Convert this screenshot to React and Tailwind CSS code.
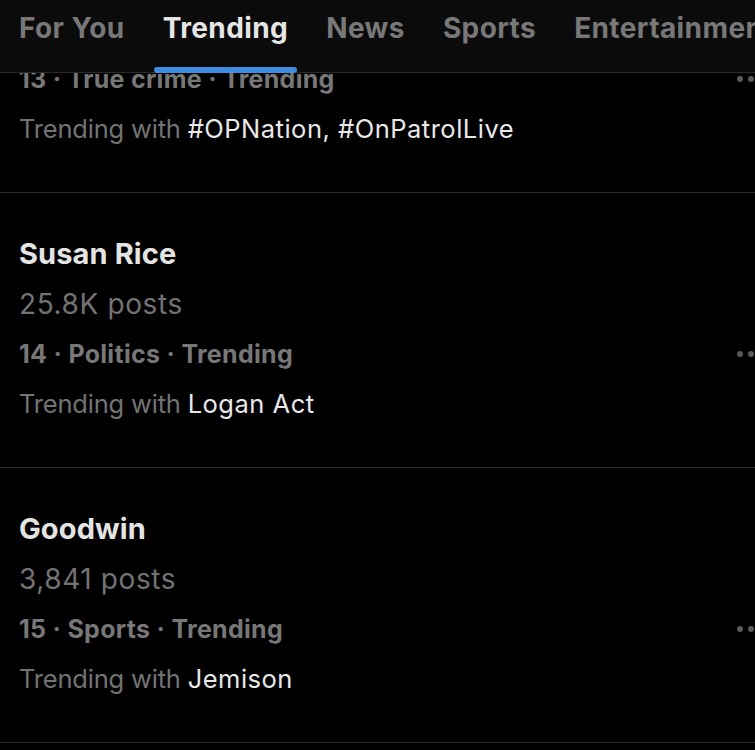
import React from "react";

const font = { fontFamily: "Inter, 'Noto Sans', sans-serif" };

function Dots({ top }) {
  return (
    <div className="absolute right-[1px] flex gap-[5px]" style={{ top }}>
      <span className="block h-[6px] w-[6px] rounded-full bg-[#5a5a5a]" />
      <span className="block h-[6px] w-[6px] rounded-full bg-[#5a5a5a]" />
    </div>
  );
}

function Item({ title, posts, category, withText, showTop = true, first = false }) {
  return (
    <div
      className={`relative border-b border-[#2a2a2a] pl-[19px] ${first ? "pt-[54px]" : "pt-[36px]"} pb-[38px]`}
    >
      {showTop && (
        <>
          <div className="h-[50px] text-[29px] font-bold leading-[50px] tracking-[0.1px] text-[#e4e4e4]">
            {title}
          </div>
          <div className="h-[50px] text-[28px] leading-[50px] tracking-[0.6px] text-[#737373]">{posts}</div>
        </>
      )}
      <div className="h-[50px] text-[25px] font-bold leading-[50px] tracking-[0.3px] text-[#777777]">
        {category}
      </div>
      <div className="h-[50px] text-[25.5px] leading-[50px] tracking-[-0.2px] text-[#737373]">
        Trending with <span className="tracking-[0.5px] text-[#e8e8e8]">{withText}</span>
      </div>
      <Dots top={first ? 76 : 158} />
    </div>
  );
}

export default function App() {
  const tabs = ["For You", "Trending", "News", "Sports", "Entertainment"];
  return (
    <div className="relative h-[750px] w-[755px] overflow-hidden bg-black" style={font}>
      <div className="absolute inset-x-0 top-0 z-10 h-[73px] border-b border-[#2a2a2a] bg-[#0b0b0b]">
        <div className="flex h-full items-start gap-[38px] whitespace-nowrap pl-[19px] pt-[8px]">
          {tabs.map((t) => (
            <div key={t} className="relative">
              <span
                className={`text-[28px] font-bold leading-[40px] tracking-[0.4px] ${
                  t === "Trending" ? "text-[#e6e6e6]" : "text-[#787878]"
                }`}
              >
                {t}
              </span>
              {t === "Trending" && (
                <div className="absolute left-[-9px] right-[-9px] top-[59px] h-[6px] rounded-full bg-[#3d8ee0]" />
              )}
            </div>
          ))}
        </div>
      </div>
      <div className="flex flex-col">
        <Item
          first
          showTop={false}
          category="13 · True crime · Trending"
          withText="#OPNation, #OnPatrolLive"
        />
        <Item
          title="Susan Rice"
          posts="25.8K posts"
          category="14 · Politics · Trending"
          withText="Logan Act"
        />
        <Item
          title="Goodwin"
          posts="3,841 posts"
          category="15 · Sports · Trending"
          withText="Jemison"
        />
      </div>
    </div>
  );
}
